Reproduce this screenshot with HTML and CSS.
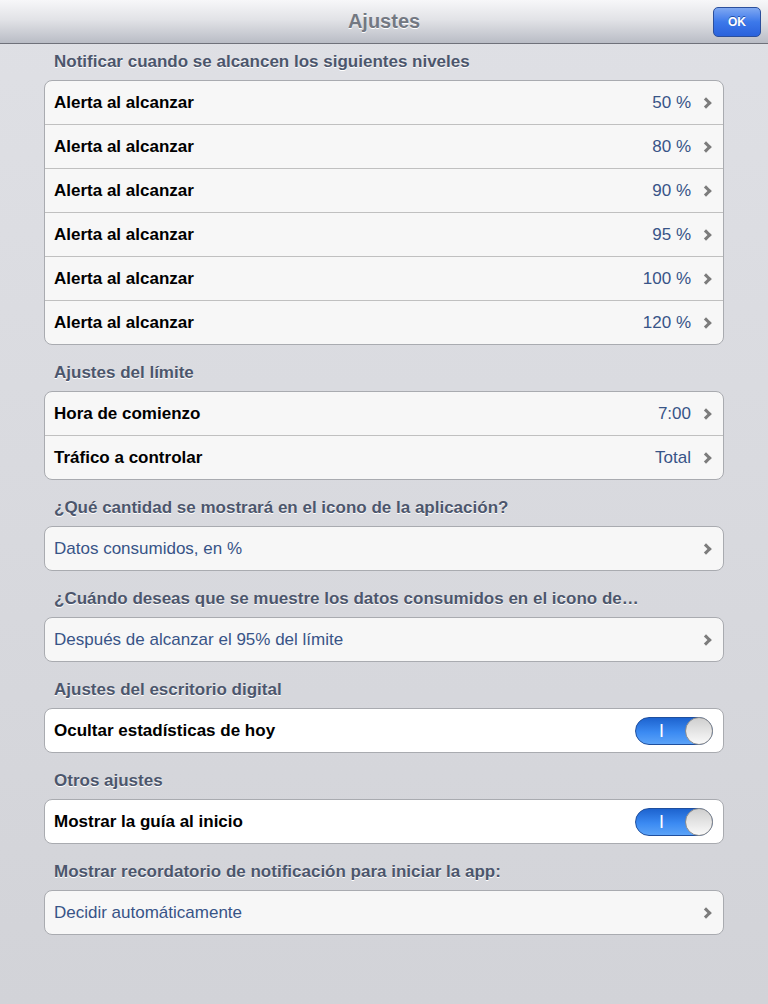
FILE: index.html
```html
<!DOCTYPE html>
<html><head><meta charset="utf-8"/>
<link rel="stylesheet" href="styles.css">
<title>Ajustes</title></head>
<body>
<div class="navbar">
 <h1 class="title">Ajustes</h1>
 <button class="okbtn">OK</button>
</div>
<div class="page">

<h2 class="sechead first">Notificar cuando se alcancen los siguientes niveles</h2>
<div class="group">
 <div class="row"><span class="label">Alerta al alcanzar</span><span class="value">50 %</span><span class="chev"></span></div>
 <div class="row"><span class="label">Alerta al alcanzar</span><span class="value">80 %</span><span class="chev"></span></div>
 <div class="row"><span class="label">Alerta al alcanzar</span><span class="value">90 %</span><span class="chev"></span></div>
 <div class="row"><span class="label">Alerta al alcanzar</span><span class="value">95 %</span><span class="chev"></span></div>
 <div class="row"><span class="label">Alerta al alcanzar</span><span class="value">100 %</span><span class="chev"></span></div>
 <div class="row"><span class="label">Alerta al alcanzar</span><span class="value">120 %</span><span class="chev"></span></div>
</div>

<h2 class="sechead">Ajustes del límite</h2>
<div class="group">
 <div class="row"><span class="label">Hora de comienzo</span><span class="value">7:00</span><span class="chev"></span></div>
 <div class="row"><span class="label">Tráfico a controlar</span><span class="value">Total</span><span class="chev"></span></div>
</div>

<h2 class="sechead">¿Qué cantidad se mostrará en el icono de la aplicación?</h2>
<div class="group">
 <div class="row"><span class="choice">Datos consumidos, en %</span><span class="chev"></span></div>
</div>

<h2 class="sechead">¿Cuándo deseas que se muestre los datos consumidos en el icono de…</h2>
<div class="group">
 <div class="row"><span class="choice">Después de alcanzar el 95% del límite</span><span class="chev"></span></div>
</div>

<h2 class="sechead">Ajustes del escritorio digital</h2>
<div class="group white">
 <div class="row"><span class="label">Ocultar estadísticas de hoy</span><span class="switch"><span class="on">I</span><span class="knob"></span></span></div>
</div>

<h2 class="sechead">Otros ajustes</h2>
<div class="group white">
 <div class="row"><span class="label">Mostrar la guía al inicio</span><span class="switch"><span class="on">I</span><span class="knob"></span></span></div>
</div>

<h2 class="sechead">Mostrar recordatorio de notificación para iniciar la app:</h2>
<div class="group">
 <div class="row"><span class="choice">Decidir automáticamente</span><span class="chev"></span></div>
</div>

</div>
</body></html>
```

FILE: styles.css
```css
* { padding:0; margin:0; box-sizing:border-box; }
html, body { height:100%; }
body { font-family:"Liberation Sans", Arial, sans-serif; background:linear-gradient(#dfe0e5, #d2d3d8); }

.navbar { height:44px; display:flex; align-items:center; justify-content:center; position:relative;
 background:linear-gradient(#f7f7f9, #e2e3e7 45%, #b9bcc5); border-bottom:1px solid #6f717a; }
.title { font-size:20px; font-weight:bold; color:#737882; text-shadow:0 1px 0 #fff; }
.okbtn { position:absolute; right:7px; top:7px; width:48px; height:30px; border-radius:5px;
 border:1px solid #2b4f9c; background:linear-gradient(#7fa8f2, #3c78ea 50%, #2a62dc);
 color:#fff; font:bold 12px "Liberation Sans", Arial, sans-serif; text-shadow:0 -1px 0 #2450a8; }

.page { padding:0 44px; }
.sechead { font-size:17px; font-weight:bold; color:#4c566c; text-shadow:0 1px 0 #fff;
 padding:18px 10px 0; height:46px; line-height:19px; white-space:nowrap; overflow:hidden; }
.sechead.first { padding-top:8px; height:36px; }

.group { background:#f7f7f7; border:1px solid #a9abb0; border-radius:8px; }
.group.white { background:#fff; }
.row { height:44px; display:flex; align-items:center; padding:0 10px 0 9px; border-top:1px solid #c0c0c0; }
.row:first-child { border-top:none; height:43px; }
.label { flex:1; font-size:17px; font-weight:bold; color:#000; }
.value { font-size:17px; color:#385487; margin-right:11px; }
.choice { flex:1; font-size:17px; color:#385487; }
.chev { width:8px; height:8px; border-right:3px solid #7c7c7c; border-top:3px solid #7c7c7c;
 transform:rotate(45deg); margin-right:3px; }

.switch { width:78px; height:28px; border-radius:14px; position:relative; border:1px solid #1f4f9e;
 background:linear-gradient(#1d63cf, #3b8af2 55%, #5ba3f8); }
.on { position:absolute; left:23px; top:3px; color:#fff; font-size:18px; line-height:20px; }
.knob { position:absolute; right:-1px; top:-1px; width:28px; height:28px; border-radius:50%;
 border:1px solid #8d8d8d; background:linear-gradient(#cfcfcf, #fafafa); }
```
